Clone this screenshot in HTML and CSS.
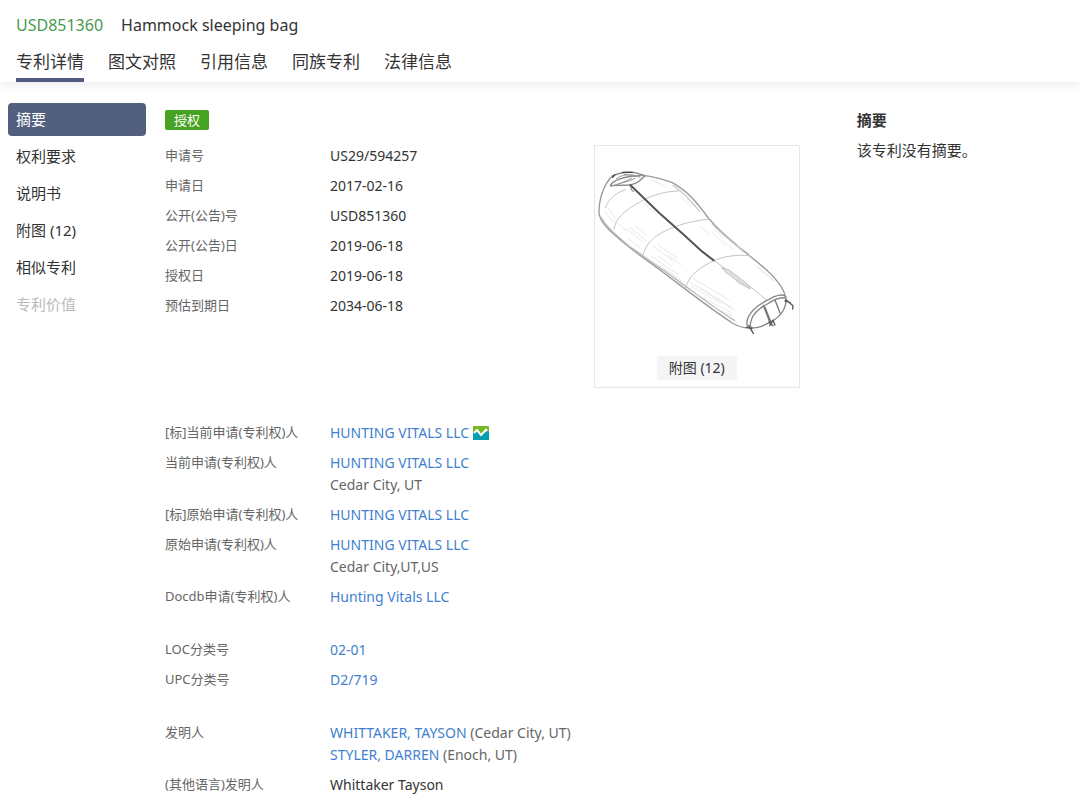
FILE: index.html
```html
<!DOCTYPE html>
<html lang="zh-CN">
<head>
    <meta charset="UTF-8">
    <meta name="viewport" content="width=device-width, initial-scale=1.0">
    <title>USD851360 Hammock sleeping bag</title>
    <link rel="stylesheet" href="styles.css">
</head>
<body>
    <header class="header">
        <h1 class="title"><span class="number">USD851360</span>Hammock sleeping bag</h1>
        <nav class="tabs">
            <a class="tab active" href="#">专利详情</a>
            <a class="tab" href="#">图文对照</a>
            <a class="tab" href="#">引用信息</a>
            <a class="tab" href="#">同族专利</a>
            <a class="tab" href="#">法律信息</a>
        </nav>
    </header>
    <div class="page">
        <nav class="sidebar">
            <a class="side-link active" href="#">摘要</a>
            <a class="side-link" href="#">权利要求</a>
            <a class="side-link" href="#">说明书</a>
            <a class="side-link" href="#">附图 (12)</a>
            <a class="side-link" href="#">相似专利</a>
            <a class="side-link disabled" href="#">专利价值</a>
        </nav>
        <main class="content">
            <span class="status">授权</span>
            <div class="overview">
                <dl class="fields">
                    <dt>申请号</dt><dd>US29/594257</dd>
                    <dt>申请日</dt><dd>2017-02-16</dd>
                    <dt>公开(公告)号</dt><dd>USD851360</dd>
                    <dt>公开(公告)日</dt><dd>2019-06-18</dd>
                    <dt>授权日</dt><dd>2019-06-18</dd>
                    <dt>预估到期日</dt><dd>2034-06-18</dd>
                </dl>
                <div class="figure">
                    <svg class="drawing" viewBox="18 18 609 600" fill="none" stroke-linecap="round" stroke-linejoin="round">
                        <!-- outline -->
                        <g stroke="#999" stroke-width="4">
                            <path d="M70 107C48 130 30 170 30 215C30 240 52 263 75 283C120 326 165 353 220 395C280 440 355 500 430 549C450 561 470 566 492 563"/>
                            <path d="M160 107C190 108 220 117 250 128C295 153 325 188 358 234C400 285 440 312 485 350C530 385 582 430 589 470"/>
                            <path d="M34 229C52 262 85 288 122 320C170 352 220 389 278 430C330 468 385 510 437 542" stroke="#bbb"/>
                            <path d="M252 136C284 158 307 183 332 214M370 252C398 283 431 307 461 333" stroke="#ccc"/>
                        </g>
                        <!-- hood -->
                        <g stroke="#888" stroke-width="4">
                            <path d="M70 109C90 98 115 95 138 98L168 107L151 123C140 132 131 134 122 135L64 137C72 121 104 111 134 108L155 107"/>
                            <path d="M66 139C90 128 116 128 138 115M82 116C100 103 122 101 145 108M82 135L127 116M106 103L153 111" stroke="#999" stroke-width="3"/>
                            <path d="M101 97L130 97M71 112L77 104" stroke="#444"/>
                        </g>
                        <!-- seams -->
                        <g stroke="#c4c4c4" stroke-width="3">
                            <path d="M49 203C61 174 79 160 110 149"/>
                            <path d="M75 266C83 223 126 202 162 181C195 163 231 154 268 153"/>
                            <path d="M162 344C173 309 193 291 222 276C266 253 310 243 361 237"/>
                            <path d="M289 445C300 408 323 388 372 363C409 347 444 344 483 347"/>
                            <path d="M376 362C430 402 483 435 533 481"/>
                            <path d="M398 384L422 391L473 430L484 447L452 430Z" fill="#e4e4e4"/>
                        </g>
                        <!-- shading -->
                        <g stroke="#ddd" stroke-width="2">
                            <path d="M48 215L71 245M57 205L80 235M75 241L112 273M110 264L158 303M125 263L172 304M139 258L174 286M166 192L200 221M117 295L151 322"/>
                            <path d="M190 317L250 362M205 312L264 355M185 347L269 405M225 384L277 423M208 348L247 378M236 345L276 375M204 371L253 409"/>
                            <path d="M302 426L430 503M315 417L420 480M307 439L395 490M323 463L426 517M333 444L435 510M354 491L430 529"/>
                            <path d="M184 117L229 141M275 169L306 201M286 165L316 200M369 276L407 317M379 270L400 292M403 301L432 328M334 260L361 284M445 316L481 342"/>
                            <path d="M409 397L464 434M424 398L477 442M505 380L553 421" stroke="#ccc"/>
                        </g>
                        <!-- zipper -->
                        <path d="M124 135L210 218L286 286L340 335L374 361" stroke="#555" stroke-width="6"/>
                        <path d="M123 134L128 151L134 154" stroke="#777" stroke-width="3"/>
                        <!-- foot end -->
                        <g stroke="#888" stroke-width="4">
                            <path d="M475 558C467 524 506 494 539 479C558 466 580 461 590 469C595 494 583 520 558 538C533 552 511 566 490 563C482 559 482 556 487 540C493 519 512 504 535 492C553 480 573 470 589 474"/>
                            <path d="M523 496L543 548M558 480L573 519M528 502L547 550" stroke="#777"/>
                            <path d="M479 557L493 580M472 562L489 566M542 557L552 541L558 555M540 546L552 557M591 479L612 497L611 507M588 483L604 487" stroke="#555"/>
                        </g>
                    </svg>
                    <button class="figure-button" type="button">附图 (12)</button>
                </div>
            </div>
            <dl class="fields">
                <dt>[标]当前申请(专利权)人</dt>
                <dd>
                    <a href="#">HUNTING VITALS LLC</a>
                    <svg class="badge" viewBox="0 0 16 14">
                        <rect width="16" height="14" rx="1" fill="#79b729"/>
                        <path d="M0 7L4 4L8 9L13 4L16 6V14H0Z" fill="#079fb0"/>
                        <path d="M1 7L4 4L8 9L13 4" fill="none" stroke="#fff" stroke-width="2"/>
                        <circle cx="13" cy="4" r="1.5" fill="#fff"/>
                    </svg>
                </dd>
                <dt>当前申请(专利权)人</dt>
                <dd><a href="#">HUNTING VITALS LLC</a><br><span class="place">Cedar City, UT</span></dd>
                <dt>[标]原始申请(专利权)人</dt>
                <dd><a href="#">HUNTING VITALS LLC</a></dd>
                <dt>原始申请(专利权)人</dt>
                <dd><a href="#">HUNTING VITALS LLC</a><br><span class="place">Cedar City,UT,US</span></dd>
                <dt>Docdb申请(专利权)人</dt>
                <dd><a href="#">Hunting Vitals LLC</a></dd>
            </dl>
            <dl class="fields">
                <dt>LOC分类号</dt><dd><a href="#">02-01</a></dd>
                <dt>UPC分类号</dt><dd><a href="#">D2/719</a></dd>
            </dl>
            <dl class="fields">
                <dt>发明人</dt>
                <dd>
                    <a href="#">WHITTAKER, TAYSON</a> <span class="place">(Cedar City, UT)</span><br>
                    <a href="#">STYLER, DARREN</a> <span class="place">(Enoch, UT)</span>
                </dd>
                <dt>(其他语言)发明人</dt><dd>Whittaker Tayson</dd>
            </dl>
        </main>
        <aside class="abstract">
            <h2>摘要</h2>
            <p>该专利没有摘要。</p>
        </aside>
    </div>
</body>
</html>
```
FILE: styles.css
```css
* {
    box-sizing: border-box;
}
body {
    margin: 0;
    background-color: #fff;
    color: #333;
    font-family: "Noto Sans", "Noto Sans CJK SC", sans-serif;
    font-size: 14px;
    line-height: 22px;
}
a {
    color: #3f7fd0;
    text-decoration: none;
}
.header {
    padding: 13px 16px 0;
    box-shadow: 0 2px 10px rgba(0, 0, 0, 0.09);
}
.title {
    margin: 0;
    font-size: 16px;
    font-weight: 400;
    line-height: 24px;
}
.number {
    margin-right: 18px;
    color: #4a9a50;
}
.tabs {
    display: flex;
    gap: 24px;
    padding-top: 12px;
}
.tab {
    padding-bottom: 3px;
    border-bottom: 4px solid transparent;
    color: #333;
    font-size: 17px;
    line-height: 26px;
}
.tab.active {
    border-color: #525c80;
}
.page {
    display: grid;
    grid-template-columns: 138px minmax(0, 17fr) minmax(0, 7fr);
    padding: 21px 11px 0 8px;
}
.sidebar {
    display: flex;
    flex-direction: column;
    gap: 4px;
}
.side-link {
    padding: 0 8px;
    border-radius: 4px;
    color: #333;
    font-size: 15px;
    line-height: 33px;
}
.side-link.active {
    background-color: #525f7f;
    color: #fff;
}
.side-link.disabled {
    color: #bbb;
}
.content {
    padding: 7px 0 0 19px;
}
.status {
    display: block;
    width: 44px;
    border-radius: 2px;
    background-color: #45a321;
    color: #fff;
    font-size: 13px;
    line-height: 20px;
    text-align: center;
}
.overview {
    display: flex;
    justify-content: space-between;
    margin: 15px 0 34px;
}
.fields {
    display: grid;
    grid-template-columns: 165px 1fr;
    row-gap: 8px;
    align-content: start;
    margin: 0 0 31px;
}
.fields:last-child {
    margin-bottom: 0;
}
.fields dt {
    color: #666;
    font-size: 13px;
    line-height: 20px;
}
.fields dd {
    margin: 0;
}
.place {
    color: #666;
}
.badge {
    width: 16px;
    height: 14px;
    vertical-align: -2px;
}
.figure {
    display: flex;
    flex-direction: column;
    align-items: center;
    width: 206px;
    padding-bottom: 7px;
    border: 1px solid #e6e6e6;
}
.drawing {
    width: 203px;
    height: 200px;
}
.figure-button {
    margin-top: 10px;
    padding: 0 12px;
    border: 0;
    background-color: #f5f5f7;
    color: #333;
    font: inherit;
    line-height: 24px;
}
.abstract {
    padding-left: 57px;
}
.abstract h2 {
    margin: 6px 0 8px;
    font-size: 15px;
    line-height: 22px;
}
.abstract p {
    margin: 0;
    font-size: 15px;
}
```
